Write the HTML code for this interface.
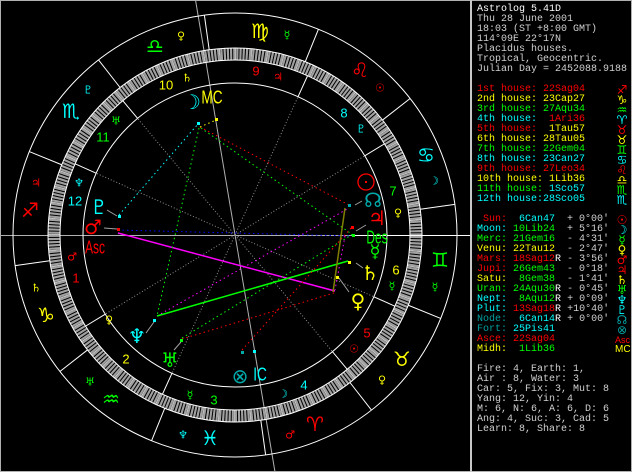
<!DOCTYPE html>
<html><head><meta charset="utf-8"><style>
html,body{margin:0;padding:0;background:#000;width:632px;height:472px;overflow:hidden;position:relative}
svg{position:absolute;left:0;top:0}
.p{position:absolute;left:477px;font-family:"Liberation Mono",monospace;font-size:10px;line-height:10px;white-space:pre;color:#d0d0d0;height:10px}
.g{position:absolute;left:615px;font-family:"DejaVu Sans",sans-serif;font-size:12px;line-height:10px;width:14px;text-align:center}
.r{color:#ff0000}.y{color:#ffff00}.gr{color:#00ff00}.c{color:#00ffff}.t{color:#00a0a0}.w{color:#fff}
</style></head><body>
<svg width="632" height="472" viewBox="0 0 632 472" font-family="DejaVu Sans, sans-serif">
<rect x="0.5" y="0.5" width="631" height="471" fill="none" stroke="#b0b0b0"/>
<line x1="471" y1="0" x2="471" y2="472" stroke="#c8c8c8" stroke-width="2"/>
<line x1="0" y1="235.5" x2="470" y2="235.5" stroke="#b0b0b0"/>
<line x1="195.5" y1="0" x2="275" y2="472" stroke="#b0b0b0"/>
<g transform="translate(235,235)" fill="none">
<circle r="222" stroke="#fff"/>
<circle r="181" stroke="#a0a0a0" stroke-width="12"/>
<circle r="181" stroke="#000" stroke-width="12" stroke-dasharray="1 2.159"/>
<circle r="181" stroke="#e0e0e0" stroke-width="12" stroke-dasharray="0.8 14.995"/>
<circle r="187" stroke="#fff"/>
<circle r="175" stroke="#fff"/>
<circle r="152" stroke="#fff"/>
<g stroke="#fff">
<line x1="187" x2="222" transform="rotate(82.07)"/>
<line x1="187" x2="222" transform="rotate(52.07)"/>
<line x1="187" x2="222" transform="rotate(22.07)"/>
<line x1="187" x2="222" transform="rotate(-7.93)"/>
<line x1="187" x2="222" transform="rotate(-37.93)"/>
<line x1="187" x2="222" transform="rotate(-67.93)"/>
<line x1="187" x2="222" transform="rotate(-97.93)"/>
<line x1="187" x2="222" transform="rotate(-127.93)"/>
<line x1="187" x2="222" transform="rotate(-157.93)"/>
<line x1="187" x2="222" transform="rotate(-187.93)"/>
<line x1="187" x2="222" transform="rotate(-217.93)"/>
<line x1="187" x2="222" transform="rotate(-247.93)"/>
</g>
<g stroke="#fff">
<line x1="152" x2="175" transform="rotate(-211.38)"/>
<line x1="152" x2="175" transform="rotate(-245.5)"/>
<line x1="152" x2="175" transform="rotate(-309.88)"/>
<line x1="152" x2="175" transform="rotate(-336.01)"/>
<line x1="152" x2="175" transform="rotate(-31.38)"/>
<line x1="152" x2="175" transform="rotate(-65.5)"/>
<line x1="152" x2="175" transform="rotate(-129.88)"/>
<line x1="152" x2="175" transform="rotate(-156.01)"/>
</g>
<g stroke="#909090" stroke-dasharray="1 2">
<line x1="0" x2="152" transform="rotate(-211.38)"/>
<line x1="0" x2="152" transform="rotate(-245.5)"/>
<line x1="0" x2="152" transform="rotate(-309.88)"/>
<line x1="0" x2="152" transform="rotate(-336.01)"/>
<line x1="0" x2="152" transform="rotate(-31.38)"/>
<line x1="0" x2="152" transform="rotate(-65.5)"/>
<line x1="0" x2="152" transform="rotate(-129.88)"/>
<line x1="0" x2="152" transform="rotate(-156.01)"/>
</g>
</g>
<line x1="355" y1="235.5" x2="470" y2="235.5" stroke="#fff"/>
<g fill="none">
<line x1="118" y1="233" x2="335" y2="291" stroke="#ff00ff" stroke-width="1.5"/>
<line x1="157" y1="316" x2="349" y2="208" stroke="#ff00ff" stroke-dasharray="1.5 3"/>
<line x1="345" y1="236" x2="335" y2="290" stroke="#ff00ff" stroke-dasharray="1.5 3"/>
<line x1="118" y1="230" x2="352" y2="236" stroke="#0000ff" stroke-dasharray="1.5 3"/>
<line x1="157" y1="316" x2="348" y2="261" stroke="#00ff00" stroke-width="1.5"/>
<line x1="182" y1="338" x2="353" y2="234" stroke="#00ff00" stroke-dasharray="1.5 3"/>
<line x1="199" y1="128" x2="157" y2="316" stroke="#00ff00" stroke-dasharray="1.5 3"/>
<line x1="201" y1="128" x2="353" y2="235" stroke="#00ff00" stroke-dasharray="1.5 3"/>
<line x1="200" y1="127" x2="349" y2="205" stroke="#ff0000" stroke-dasharray="1.5 3"/>
<line x1="182" y1="339" x2="337" y2="292" stroke="#ff0000" stroke-dasharray="1.5 3"/>
<line x1="242" y1="350" x2="352" y2="227" stroke="#ff0000" stroke-dasharray="1.5 3"/>
<line x1="119" y1="215" x2="198" y2="124" stroke="#00ffff" stroke-dasharray="1.5 3"/>
<line x1="200" y1="127" x2="216" y2="120" stroke="#ffff00" stroke-dasharray="1.5 3"/>
<line x1="345" y1="208" x2="333" y2="292" stroke="#808000" stroke-width="1.5"/>
</g>
<g>
<rect x="197" y="122" width="3" height="3" fill="#0ff"/>
<rect x="215" y="118" width="3" height="3" fill="#ff0"/>
<rect x="118" y="215" width="3" height="3" fill="#0ff"/>
<rect x="117" y="228" width="3" height="3" fill="#f00"/>
<rect x="348" y="204" width="3" height="3" fill="#0aa"/>
<rect x="351" y="226" width="3" height="3" fill="#f00"/>
<rect x="352" y="234" width="3" height="3" fill="#0f0"/>
<rect x="348" y="261" width="3" height="3" fill="#ff0"/>
<rect x="336" y="276" width="3" height="3" fill="#ff0"/>
<rect x="153" y="319" width="3" height="3" fill="#0ff"/>
<rect x="180" y="339" width="3" height="3" fill="#0f0"/>
<rect x="241" y="351" width="3" height="3" fill="#0aa"/>
<rect x="253" y="350" width="3" height="3" fill="#0ff"/>
</g>
<g stroke="#a0a0a0"><line x1="107" y1="210" x2="117" y2="216"/><line x1="104" y1="228" x2="117" y2="229"/><line x1="355" y1="205" x2="362" y2="201"/><line x1="356" y1="231" x2="366" y2="225"/><line x1="356" y1="263" x2="363" y2="268"/><line x1="339" y1="278" x2="349" y2="292"/><line x1="146" y1="333" x2="154" y2="322"/><line x1="174" y1="350" x2="181" y2="342"/></g>
<g font-size="20" text-anchor="middle" dominant-baseline="central">
<text x="315" y="424" fill="#f00">♈&#xFE0E;</text>
<text x="402" y="359" fill="#ff0">♉&#xFE0E;</text>
<text x="440" y="260" fill="#0f0">♊&#xFE0E;</text>
<text x="426" y="155" fill="#0ff">♋&#xFE0E;</text>
<text x="360" y="70" fill="#f00">♌&#xFE0E;</text>
<text x="260" y="31" fill="#ff0">♍&#xFE0E;</text>
<text x="155" y="46" fill="#0f0">♎&#xFE0E;</text>
<text x="71" y="111" fill="#0ff">♏&#xFE0E;</text>
<text x="30" y="210" fill="#f00">♐&#xFE0E;</text>
<text x="46" y="315" fill="#ff0">♑&#xFE0E;</text>
<text x="111" y="399" fill="#0f0">♒&#xFE0E;</text>
<text x="210" y="438" fill="#0ff">♓&#xFE0E;</text>
</g>
<g font-size="11" text-anchor="middle" dominant-baseline="central">
<text x="181" y="36" fill="#ff0">♀</text><text x="287" y="35" fill="#0f0">☿</text>
<text x="187" y="78" fill="#ff0">♄</text><text x="278" y="77" fill="#f00">♃</text>
<text x="380" y="88" fill="#f00">☉</text><text x="361" y="129" fill="#0ff">♇</text>
<text x="88" y="90" fill="#0ff">♇</text><text x="116" y="121" fill="#0f0">♅</text>
<text x="79" y="183" fill="#0ff">♆</text><text x="36" y="183" fill="#f00">♃</text>
<text x="72" y="257" fill="#f00">♂</text><text x="36" y="288" fill="#ff0">♄</text>
<text x="109" y="320" fill="#ff0">♀</text><text x="90" y="382" fill="#0f0">♅</text>
<text x="190" y="395" fill="#0f0">☿</text><text x="183" y="435" fill="#0ff">♆</text>
<text x="290" y="435" fill="#f00">♂</text><text x="283" y="394" fill="#0ff">☽</text>
<text x="354" y="349" fill="#f00">☉</text><text x="382" y="380" fill="#ff0">♀</text>
<text x="392" y="286" fill="#0f0">☿</text><text x="435" y="287" fill="#0f0">☿</text>
<text x="398" y="213" fill="#ff0">♀</text><text x="434" y="181" fill="#0ff">☽</text>
</g>
<g font-family="Liberation Sans, sans-serif" font-size="13" text-anchor="middle" dominant-baseline="central">
<text x="76" y="278" fill="#f00">1</text><text x="126" y="359" fill="#ff0">2</text>
<text x="214" y="400" fill="#0f0">3</text><text x="304" y="385" fill="#0ff">4</text>
<text x="367" y="333" fill="#f00">5</text><text x="396" y="270" fill="#ff0">6</text>
<text x="393" y="191" fill="#0f0">7</text><text x="344" y="113" fill="#0ff">8</text>
<text x="256" y="71" fill="#f00">9</text><text x="166" y="85" fill="#ff0">10</text>
<text x="103" y="137" fill="#0f0">11</text><text x="75" y="201" fill="#0ff">12</text>
</g>
<g font-size="20" text-anchor="middle" dominant-baseline="central">
<circle cx="366" cy="182" r="8" fill="none" stroke="#f00" stroke-width="1.3"/><rect x="365" y="181" width="2" height="2" fill="#f00"/>
<text x="373" y="200" fill="#0aa">☊</text>
<text x="377" y="218" fill="#f00">♃</text>
<text x="375" y="252" fill="#0f0" font-size="18">☿</text>
<text x="370" y="273" fill="#ff0">♄</text>
<text x="358" y="301" fill="#ff0">♀</text>
<text x="192" y="102" fill="#0ff">☽</text>
<text x="99" y="207" fill="#0ff">♇</text>
<text x="93" y="227" fill="#f00">♂</text>
<text x="137" y="336" fill="#0ff">♆</text>
<text x="170" y="360" fill="#0f0">♅</text>
<text x="240" y="376" fill="#0aa">⊗</text>
</g>
<g font-family="Liberation Sans Narrow, Liberation Sans, sans-serif" font-size="17" text-anchor="middle" dominant-baseline="central">
<text x="212" y="98" fill="#ff0" transform="translate(212 98) scale(0.8 1.1) translate(-212 -98)">MC</text>
<text x="95" y="248" fill="#f00" transform="translate(95 248) scale(0.7 1.1) translate(-95 -248)">Asc</text>
<text x="377" y="238" fill="#0f0" transform="translate(377 238) scale(0.7 1.1) translate(-377 -238)">Des</text>
<text x="260" y="375" fill="#0ff" transform="translate(260 375) scale(0.8 1.1) translate(-260 -375)">IC</text>
</g>
</svg>

<div class="p" style="top:5px;color:#fff">Astrolog 5.41D</div>
<div class="p" style="top:15px">Thu 28 June 2001</div>
<div class="p" style="top:25px">18:03 (ST +8:00 GMT)</div>
<div class="p" style="top:35px">114°09E 22°17N</div>
<div class="p" style="top:45px">Placidus houses.</div>
<div class="p" style="top:55px">Tropical, Geocentric.</div>
<div class="p" style="top:65px">Julian Day = 2452088.9188</div>

<div class="p" style="top:85px"><span class="r">1st house: </span><span class="r">22Sag04</span></div><div class="g r" style="top:85px">♐&#xFE0E;</div>
<div class="p" style="top:95px"><span class="y">2nd house: </span><span class="y">23Cap27</span></div><div class="g y" style="top:95px">♑&#xFE0E;</div>
<div class="p" style="top:105px"><span class="gr">3rd house: </span><span class="gr">27Aqu34</span></div><div class="g gr" style="top:105px">♒&#xFE0E;</div>
<div class="p" style="top:115px"><span class="c">4th house: </span><span class="r"> 1Ari36</span></div><div class="g c" style="top:115px">♈&#xFE0E;</div>
<div class="p" style="top:125px"><span class="r">5th house: </span><span class="y"> 1Tau57</span></div><div class="g r" style="top:125px">♉&#xFE0E;</div>
<div class="p" style="top:135px"><span class="y">6th house: </span><span class="y">28Tau05</span></div><div class="g y" style="top:135px">♉&#xFE0E;</div>
<div class="p" style="top:145px"><span class="gr">7th house: </span><span class="gr">22Gem04</span></div><div class="g gr" style="top:145px">♊&#xFE0E;</div>
<div class="p" style="top:155px"><span class="c">8th house: </span><span class="c">23Can27</span></div><div class="g c" style="top:155px">♋&#xFE0E;</div>
<div class="p" style="top:165px"><span class="r">9th house: </span><span class="r">27Leo34</span></div><div class="g r" style="top:165px">♌&#xFE0E;</div>
<div class="p" style="top:175px"><span class="y">10th house:</span><span class="y"> 1Lib36</span></div><div class="g y" style="top:175px">♎&#xFE0E;</div>
<div class="p" style="top:185px"><span class="gr">11th house:</span><span class="c"> 1Sco57</span></div><div class="g gr" style="top:185px">♏&#xFE0E;</div>
<div class="p" style="top:195px"><span class="c">12th house:</span><span class="c">28Sco05</span></div><div class="g c" style="top:195px">♏&#xFE0E;</div>

<div class="p" style="top:215px"><span class="r"> Sun:</span> <span class="c"> 6Can47</span>  + 0°00'</div><div class="g r" style="top:215px">☉</div>
<div class="p" style="top:225px"><span class="c">Moon:</span> <span class="gr">10Lib24</span>  + 5°16'</div><div class="g c" style="top:225px">☽</div>
<div class="p" style="top:235px"><span class="gr">Merc:</span> <span class="gr">21Gem16</span>  - 4°31'</div><div class="g gr" style="top:235px">☿</div>
<div class="p" style="top:245px"><span class="y">Venu:</span> <span class="y">22Tau12</span>  - 2°47'</div><div class="g y" style="top:245px">♀</div>
<div class="p" style="top:255px"><span class="r">Mars:</span> <span class="r">18Sag12</span><span class="w">R</span> - 3°56'</div><div class="g r" style="top:255px">♂</div>
<div class="p" style="top:265px"><span class="r">Jupi:</span> <span class="gr">26Gem43</span>  - 0°18'</div><div class="g r" style="top:265px">♃</div>
<div class="p" style="top:275px"><span class="y">Satu:</span> <span class="gr"> 8Gem38</span>  - 1°41'</div><div class="g y" style="top:275px">♄</div>
<div class="p" style="top:285px"><span class="gr">Uran:</span> <span class="gr">24Aqu30</span><span class="w">R</span> - 0°45'</div><div class="g gr" style="top:285px">♅</div>
<div class="p" style="top:295px"><span class="c">Nept:</span> <span class="gr"> 8Aqu12</span><span class="w">R</span> + 0°09'</div><div class="g c" style="top:295px">♆</div>
<div class="p" style="top:305px"><span class="c">Plut:</span> <span class="r">13Sag18</span><span class="w">R</span> +10°40'</div><div class="g c" style="top:305px">♇</div>
<div class="p" style="top:315px"><span class="t">Node:</span> <span class="c"> 6Can14</span><span class="w">R</span> + 0°00'</div><div class="g t" style="top:315px">☊</div>
<div class="p" style="top:325px"><span class="t">Fort:</span> <span class="c">25Pis41</span></div><div class="g t" style="top:325px">⊗</div>
<div class="p" style="top:335px"><span class="r">Asce:</span> <span class="r">22Sag04</span></div><div class="g r" style="top:335px;font-size:9px;font-family:'Liberation Sans',sans-serif">Asc</div>
<div class="p" style="top:345px"><span class="y">Midh:</span> <span class="gr"> 1Lib36</span></div><div class="g y" style="top:345px;font-size:10px;font-family:'Liberation Sans',sans-serif">MC</div>

<div class="p" style="top:365px">Fire: 4, Earth: 1,</div>
<div class="p" style="top:375px">Air : 8, Water: 3</div>
<div class="p" style="top:385px">Car: 5, Fix: 3, Mut: 8</div>
<div class="p" style="top:395px">Yang: 12, Yin: 4</div>
<div class="p" style="top:405px">M: 6, N: 6, A: 6, D: 6</div>
<div class="p" style="top:415px">Ang: 4, Suc: 3, Cad: 5</div>
<div class="p" style="top:425px">Learn: 8, Share: 8</div>
</body></html>
